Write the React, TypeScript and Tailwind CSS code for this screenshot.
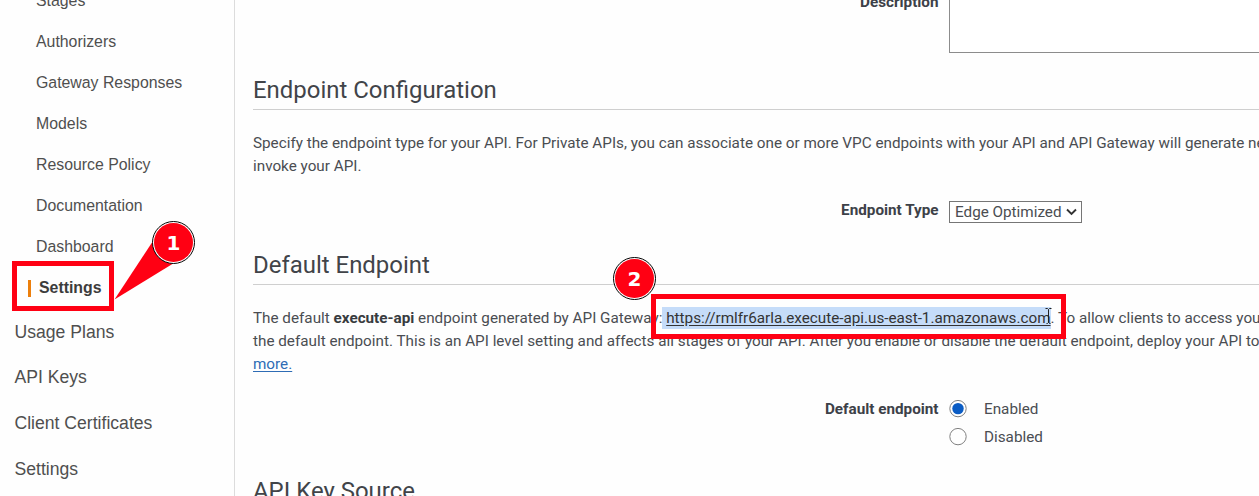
import React from "react";

const apiLinks = [
  "Stages",
  "Authorizers",
  "Gateway Responses",
  "Models",
  "Resource Policy",
  "Documentation",
  "Dashboard",
];

const rootLinks = ["Usage Plans", "API Keys", "Client Certificates", "Settings"];

function Sidebar() {
  return (
    <nav className="w-[235px] shrink-0 overflow-hidden border-r border-[#dcdcdc] font-['Liberation_Sans',Arial,sans-serif] text-[#4f4f4f]">
      <ul className="-mt-[20px] mb-px text-[15.85px]">
        {apiLinks.map((label) => (
          <li key={label} className="flex h-[41px] items-center pl-9">
            {label}
          </li>
        ))}
        <li className="flex h-[41px] items-center gap-2 pl-7 font-bold text-[#3c3c3c]">
          <span className="mt-[2px] h-[17px] w-[3px] bg-[#ec7f0c]" />
          Settings
        </li>
      </ul>
      <ul className="text-[17.6px]">
        {rootLinks.map((label) => (
          <li key={label} className="flex h-[45.7px] items-center pl-[14.5px]">
            {label}
          </li>
        ))}
      </ul>
    </nav>
  );
}

function SectionTitle({ children }: { children: React.ReactNode }) {
  return (
    <h2 className="h-[36px] border-b border-[#cfcfcf] text-[23.95px] leading-[32px] text-[#414449]">
      {children}
    </h2>
  );
}

function Label({ children }: { children: React.ReactNode }) {
  return (
    <div className="w-[686px] shrink-0 pr-[0.5px] text-right font-bold leading-[23px] text-[#3d4148]">
      {children}
    </div>
  );
}

function Radio({ label, checked = false }: { label: string; checked?: boolean }) {
  return (
    <label className="flex h-[28px] items-center gap-[17px]">
      <svg width="18" height="18" viewBox="0 0 18 18">
        <circle cx="9" cy="8.6" r="8.2" fill="#fff" stroke="#808080" strokeWidth="1" />
        {checked && <circle cx="9" cy="8.6" r="5.7" fill="#0b5cc4" />}
      </svg>
      <span className="pt-[2px]">{label}</span>
    </label>
  );
}

function Badge({ n }: { n: number }) {
  return (
    <div className="flex size-[43px] items-center justify-center rounded-full border border-black bg-white p-px">
      <div className="flex size-full items-center justify-center rounded-full bg-[#ff0013] font-['DejaVu_Sans',sans-serif] text-[20px] font-bold leading-none text-white">
        {n}
      </div>
    </div>
  );
}

export default function App() {
  return (
    <div className="relative flex h-[496px] w-[1259px] overflow-hidden bg-[#fefefe]">
      <Sidebar />
      <main className="h-[496px] min-w-0 flex-1 overflow-hidden whitespace-nowrap pl-[18px] font-['Roboto',sans-serif] text-[15.25px] text-[#4a4d52]">
        <div className="flex h-[74px] gap-[10px]">
          <Label>
            <div className="-mt-[9px]">Description</div>
          </Label>
          <div className="h-[53px] w-[400px] border-b border-l border-[#8c8c8c] bg-white" />
        </div>

        <SectionTitle>Endpoint Configuration</SectionTitle>
        <p className="mt-[21.5px] h-[69px] leading-[23px]">
          Specify the endpoint type for your API. For Private APIs, you can associate one or more VPC endpoints with your API and API Gateway will generate new
          <br />
          invoke your API.
        </p>
        <div className="flex h-[48.5px] gap-[10px]">
          <Label>
            <div className="-mt-[2px]">Endpoint Type</div>
          </Label>
          <div className="flex h-[22px] w-[133px] items-center justify-between border border-[#767676] bg-white pl-[5px] pr-[4px]">
            <span className="leading-[20px]">Edge Optimized</span>
            <svg width="11" height="8" viewBox="0 0 11 8" fill="none" stroke="#333" strokeWidth="1.9">
              <path d="M1 1.5 5.5 6 10 1.5" />
            </svg>
          </div>
        </div>

        <SectionTitle>Default Endpoint</SectionTitle>
        <p className="mt-[22px] h-[90px] leading-[22.8px]">
          The default <b className="text-[#383b40]">execute-api</b> endpoint generated by API Gateway:
          <span className="bg-[#c5dcf9] py-[2px] text-[#333]">
            {" "}
            <span className="tracking-[-0.01px] underline underline-offset-2">https://rmlfr6arla.execute-api.us-east-1.amazonaws.com</span>
          </span>
          . To allow clients to access your
          <br />
          the default endpoint. This is an API level setting and affects all stages of your API. After you enable or disable the default endpoint, deploy your API to a
          <br />
          <a className="text-[#2e6cb5] underline underline-offset-2">more.</a>
        </p>
        <div className="flex h-[78px] gap-[10px]">
          <Label>
            <div className="mt-px">Default endpoint</div>
          </Label>
          <div className="-mt-[2.3px]">
            <Radio label="Enabled" checked />
            <Radio label="Disabled" />
          </div>
        </div>

        <SectionTitle>API Key Source</SectionTitle>
      </main>

      <div className="absolute left-[12px] top-[261px] h-[50px] w-[102px] border-[5px] border-[#ff0013]" />
      <svg className="absolute left-[114px] top-[236px]" width="64" height="64" viewBox="0 0 64 64">
        <path d="M0.5 63.5 39 5 60 27Z" fill="#ff0013" />
      </svg>
      <div className="absolute left-[152px] top-[221px]">
        <Badge n={1} />
      </div>

      <div className="absolute left-[651px] top-[294px] h-[45px] w-[415px] border-[5px] border-[#ff0013]" />
      <div className="absolute left-[613px] top-[257px]">
        <Badge n={2} />
      </div>
      <svg className="absolute left-[1045px] top-[308px]" width="7" height="17" viewBox="0 0 7 17" fill="none" stroke="#222" strokeWidth="1">
        <path d="M0.5 0.5H2.5L3.5 1.5 4.5 0.5H6.5M3.5 1.5V14.5M1.5 15.5H2.5L3.5 14.5 4.5 15.5H5.5" />
      </svg>
    </div>
  );
}
